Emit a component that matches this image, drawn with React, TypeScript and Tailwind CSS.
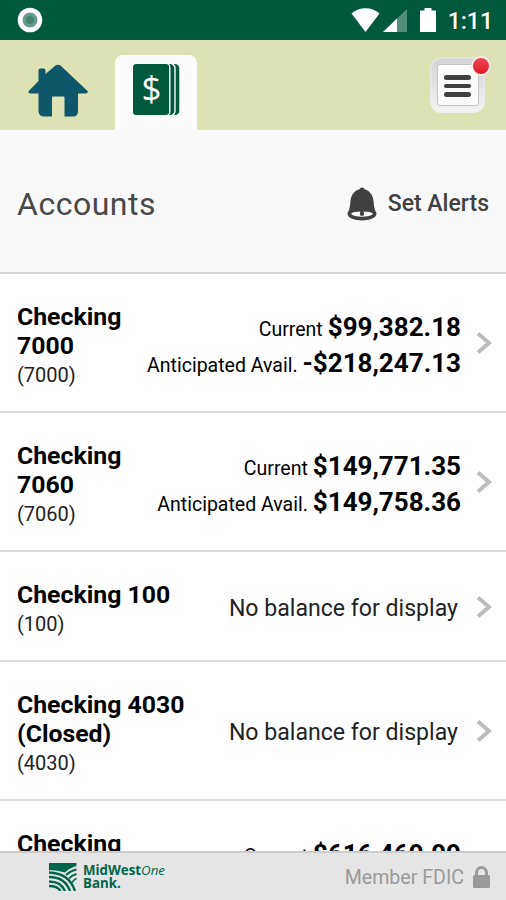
interface Balance {
  label: string;
  amount: string;
}

interface Account {
  id: string;
  name: string[];
  number: string;
  balances: Balance[];
}

const accounts: Account[] = [
  {
    id: 'a1',
    name: ['Checking', '7000'],
    number: '7000',
    balances: [
      { label: 'Current', amount: '$99,382.18' },
      { label: 'Anticipated Avail.', amount: '-$218,247.13' },
    ],
  },
  {
    id: 'a2',
    name: ['Checking', '7060'],
    number: '7060',
    balances: [
      { label: 'Current', amount: '$149,771.35' },
      { label: 'Anticipated Avail.', amount: '$149,758.36' },
    ],
  },
  { id: 'a3', name: ['Checking 100'], number: '100', balances: [] },
  { id: 'a4', name: ['Checking 4030', '(Closed)'], number: '4030', balances: [] },
  {
    id: 'a5',
    name: ['Checking'],
    number: '',
    balances: [{ label: 'Current', amount: '$616,469.99' }],
  },
];

export default function App() {
  return (
    <div className="flex h-[900px] w-[506px] flex-col overflow-hidden bg-white font-[Roboto,sans-serif] text-black">
      <StatusBar />
      <TopNav />

      <header className="flex h-[144px] shrink-0 items-center justify-between border-b-2 border-[#d5d5d5] bg-[#f9f9f9] px-[17px] pt-[5px]">
        <h1 className="text-[32px] leading-9 tracking-[0.5px] text-[#484848]">Accounts</h1>
        <button className="flex items-center gap-[10px] text-[#414141]">
          <BellIcon />
          <span className="text-[23px] leading-8 font-medium">Set Alerts</span>
        </button>
      </header>

      <main className="min-h-0 flex-1 overflow-hidden">
        {accounts.map((account) => (
          <AccountRow key={account.id} account={account} />
        ))}
      </main>

      <Footer />
    </div>
  );
}

function StatusBar() {
  return (
    <div className="flex h-10 shrink-0 items-center justify-between bg-[#00583d] pr-[13px] pl-[17px]">
      <svg width="26" height="26" viewBox="0 0 26 26">
        <circle cx="13" cy="13" r="12.3" fill="#fff" />
        <circle cx="13" cy="13" r="7.5" fill="#669b8a" />
        <circle cx="13" cy="13" r="4" fill="#428471" />
      </svg>
      <div className="flex items-center">
        <svg width="87" height="26" viewBox="0 0 87 26">
          <path d="M.5 6.5C8.500-.5 20.500-.5 28.500 6.500L14.500 25Z" fill="#fff" />
          <path d="M56 2V25H32Z" fill="#538e7b" />
          <path d="M46 11.500V25H32Z" fill="#fff" />
          <path d="M73.500 1h7v2.500h4.500V25h-16V3.500h4.500Z" fill="#fff" />
        </svg>
        <span className="ml-[10px] pt-[3px] text-[23px] leading-8 font-medium text-white">1:11</span>
      </div>
    </div>
  );
}

function TopNav() {
  return (
    <nav className="flex h-[90px] shrink-0 items-end justify-between bg-[#dce2b3] pr-[21px]">
      <div className="flex h-full items-end">
        <button className="flex h-full w-[115px] items-center pt-[11px] pl-7">
          <svg width="60" height="54" viewBox="0 0 60 54" fill="#0e566a">
            <path d="M10.500 17V6.500q0-2 2-2h3q2 0 2 2V10L27.500 1.500Q30 0 32.500 1.500L59.500 27q1 2.500-2 2.500H50V47q0 5.500-5 5.500h-8.500V33.500q0-1-1-1H25q-1 0-1 1v19h-7.500q-6 0-6-5.500V29.500H3Q-.5 29.500.8 27Z" />
          </svg>
        </button>
        <button className="flex h-[75px] w-[82px] justify-center rounded-t-lg bg-[#fbfbfb] pt-2">
          <svg width="48" height="54" viewBox="0 0 48 54">
            <g fill="#00583d" stroke="#fbfbfb" strokeWidth="1.400">
              <rect x="12" y=".3" width="36" height="52.400" rx="5" />
              <rect x="6.500" y=".3" width="36.500" height="52.400" rx="5" />
              <rect x=".3" y=".3" width="37.500" height="52.400" rx="4" />
            </g>
            <text x="19.500" y="38" textAnchor="middle" fill="#fff" className="font-['Open_Sans',sans-serif] text-[35px]">
              $
            </text>
          </svg>
        </button>
      </div>

      <button className="relative mb-[17px] flex h-[56px] w-[55px] items-center justify-center rounded-xl bg-linear-to-b from-[#d4d4d4] via-[#e2e2e2] to-[#f4f4f4] shadow-[inset_0_0_2px_1px_#eeeeee]">
        <span className="flex h-[42px] w-[42px] flex-col items-center justify-center gap-[4px] rounded-[3px] border border-[#c4c4c4] bg-[#fafafa] pt-[2px]">
          <span className="h-[5px] w-[27px] rounded-full bg-[#414141]" />
          <span className="h-[4px] w-[27px] rounded-full bg-[#414141]" />
          <span className="h-[5px] w-[27px] rounded-full bg-[#414141]" />
        </span>
        <span className="absolute -top-[1px] -right-[6px] h-5 w-5 rounded-full border-2 border-[#faeceb] bg-linear-to-b from-[#f04450] to-[#e01728]" />
      </button>
    </nav>
  );
}

function AccountRow({ account }: { account: Account }) {
  const hasBalances = account.balances.length > 0;

  return (
    <div className="flex items-center border-b-2 border-[#d9d9d9] pt-[28px] pr-[14px] pb-[21px] pl-[17px]">
      <div className={hasBalances ? 'min-h-[88px] shrink-0' : 'shrink-0'}>
        {account.name.map((line) => (
          <div key={line} className="text-[24.800px] leading-[29px] font-bold">
            {line}
          </div>
        ))}
        {account.number && (
          <div className="h-[30px] text-[20px] leading-[30px] text-[#222222]">({account.number})</div>
        )}
      </div>

      <div className="min-w-0 flex-1 text-right">
        {hasBalances ? (
          <div className="mb-[2px] min-h-[72px]">
            {account.balances.map((balance) => (
              <div
                key={balance.label}
                className="flex h-[36px] items-baseline justify-end gap-[5px] pr-[15px] leading-[36px] whitespace-nowrap"
              >
                <span className="text-[19.500px]">{balance.label}</span>
                <span className="text-[26px] font-bold">{balance.amount}</span>
              </div>
            ))}
          </div>
        ) : (
          <div className="pr-[18px] pb-[2px] text-[23.100px] leading-8 text-[#222222]">No balance for display</div>
        )}
      </div>

      <svg width="16" height="24" viewBox="0 0 16 24" className="mb-[6px] shrink-0">
        <path d="M2 2.500L13 12L2 21.500" fill="none" stroke="#bdbdbd" strokeWidth="4" />
      </svg>
    </div>
  );
}

function BellIcon() {
  return (
    <svg width="32" height="34" viewBox="0 0 32 34">
      <path d="M16 .5q2 0 2.500 1.800C24.500 4 27 9 27.500 14c.5 6 1 9 2.800 11.500C33 36 -1 36 1.700 25.500C3.500 23 4 20 4.500 14C5 9 7.500 4 13.500 2.300Q14 .5 16 .5Z" fill="#414141" />
      <path d="M5 27Q6.500 24.600 16 24.600T27 27Q24 29.800 16 29.800T5 27Z" fill="#f9f9f9" />
      <path d="M14.500 23.500h3l.6 3.500q0 2-2.100 2t-2.100-2Z" fill="#414141" />
    </svg>
  );
}

function Footer() {
  return (
    <footer className="flex h-[49px] shrink-0 items-center justify-between border-t-2 border-[#cccccc] bg-[#e5e5e5] pr-[16px] pl-[49px]">
      <div className="flex items-center gap-[6px] text-[#00664b]">
        <svg width="28" height="28" viewBox="0 0 28 28">
          <path d="M0 0H27.500V3Q20 5 16 9.500Q9 7 0 7Z" fill="currentColor" />
          <g fill="none" stroke="currentColor" strokeWidth="2.300">
            <path d="M0 9.500Q20 10 26 28" />
            <path d="M0 14Q16 14 21 28" />
            <path d="M0 18.500Q12 18.500 16 28" />
            <path d="M0 23Q9 23 11.500 28" />
            <path d="M17 12Q22 7.500 27.500 6.500" strokeWidth="1.800" />
            <path d="M20 15.500Q23 12 27.500 11" strokeWidth="1.800" />
            <path d="M23 19.500Q25 16.500 27.500 15.500" strokeWidth="1.800" />
          </g>
        </svg>
        <div className="font-['Open_Sans',sans-serif] text-[13.300px] leading-[14px] font-bold">
          <div>
            MidWest<span className="font-normal italic">One</span>
          </div>
          <div className="-mt-px">Bank.</div>
        </div>
      </div>
      <div className="flex items-center gap-[9px] text-[#999999]">
        <span className="pt-[2px] text-[19.600px] leading-7">Member FDIC</span>
        <svg width="17" height="22" viewBox="0 0 17 22">
          <path d="M3.500 10V6.500a5 5 0 0 1 10 0V10" fill="none" stroke="currentColor" strokeWidth="3" />
          <rect x="0" y="9" width="17" height="13" rx="1.500" fill="currentColor" />
        </svg>
      </div>
    </footer>
  );
}
